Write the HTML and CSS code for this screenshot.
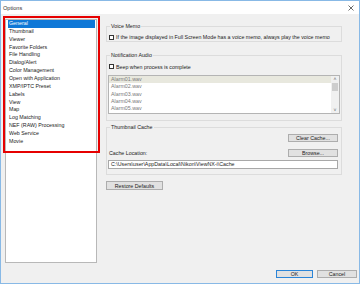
FILE: index.html
```html
<!DOCTYPE html>
<html lang="en">
  <head>
    <meta charset="UTF-8" />
    <meta name="viewport" content="width=device-width, initial-scale=1.0" />
    <title>Options</title>
    <link rel="stylesheet" href="styles.css">
  </head>
  <body>
    <div class="window">
      <div class="titlebar">
        <span class="title">Options</span>
        <svg class="close" width="6" height="6" viewBox="0 0 6 6">
          <path d="M0.5 0.5 L5.5 5.5 M5.5 0.5 L0.5 5.5" stroke="#444" stroke-width="0.8" />
        </svg>
      </div>

      <div class="content">
        <div class="main">
          <ul class="nav">
            <li class="selected">General</li>
            <li>Thumbnail</li>
            <li>Viewer</li>
            <li>Favorite Folders</li>
            <li>File Handling</li>
            <li>Dialog/Alert</li>
            <li>Color Management</li>
            <li>Open with Application</li>
            <li>XMP/IPTC Preset</li>
            <li>Labels</li>
            <li>View</li>
            <li>Map</li>
            <li>Log Matching</li>
            <li>NEF (RAW) Processing</li>
            <li>Web Service</li>
            <li>Movie</li>
          </ul>

          <div class="settings">
            <fieldset class="group group-voice">
              <legend>Voice Memo</legend>
              <label class="check"><span class="box"></span>If the image displayed in Full Screen Mode has a voice memo, always play the voice memo</label>
            </fieldset>

            <fieldset class="group group-audio">
              <legend>Notification Audio</legend>
              <label class="check"><span class="box"></span>Beep when process is complete</label>
              <div class="sound-list">
                <ul class="sounds">
                  <li class="current">Alarm01.wav</li>
                  <li>Alarm02.wav</li>
                  <li>Alarm03.wav</li>
                  <li>Alarm04.wav</li>
                  <li>Alarm05.wav</li>
                </ul>
                <div class="scrollbar">
                  <span class="arrow">&#708;</span>
                  <span class="thumb"></span>
                  <span class="arrow arrow-down">&#709;</span>
                </div>
              </div>
            </fieldset>

            <fieldset class="group group-cache">
              <legend>Thumbnail Cache</legend>
              <div class="row row-end">
                <button class="btn btn-wide">Clear Cache...</button>
              </div>
              <div class="row row-split">
                <span>Cache Location:</span>
                <button class="btn btn-wide">Browse...</button>
              </div>
              <div class="path">C:\Users\user\AppData\Local\Nikon\ViewNX-i\Cache</div>
            </fieldset>

            <button class="btn btn-restore">Restore Defaults</button>
          </div>
        </div>

        <div class="footer">
          <button class="btn btn-default">OK</button>
          <button class="btn btn-cancel">Cancel</button>
        </div>
      </div>

      <!-- annotation over the category list -->
      <div class="marker"></div>
    </div>
  </body>
</html>
```

FILE: styles.css
```css
/* Basic Reset */
* {
  margin: 0;
  padding: 0;
  box-sizing: border-box;
}

body {
  font-family: "Liberation Sans", Arial, sans-serif;
  font-size: 5.3px;
  color: #222;
  background: #fff;
}

/* Window frame */
.window {
  position: relative;
  width: 360px;
  height: 284px;
  border: 1px solid #88b9e6;
  display: flex;
  flex-direction: column;
}

.titlebar {
  height: 13px;
  background: #fff;
  display: flex;
  align-items: center;
  justify-content: space-between;
  padding: 0 5px 0 2px;
}

.title {
  font-size: 5.6px;
  color: #333;
}

.close {
  display: block;
}

.content {
  flex: 1;
  background: #f0f0f0;
  display: flex;
  flex-direction: column;
}

.main {
  flex: 1;
  display: flex;
  padding: 5px 0 0 4px;
}

/* Category list */
.nav {
  list-style: none;
  width: 92px;
  background: #fff;
  border: 1px solid #b8b8b8;
  border-bottom-width: 1.5px;
  padding: 0 1px 0 2px;
}

.nav li {
  height: 7.87px;
  line-height: 7.87px;
  padding-left: 1px;
  white-space: nowrap;
}

.nav li.selected {
  background: #0f78d7;
  color: #fff;
}

/* Settings column */
.settings {
  width: 236px;
  margin-left: 9px;
  padding-top: 4px;
}

.group {
  border: 1px solid #dcdcdc;
  padding: 0 1px;
}

.group legend {
  margin-left: 2px;
  padding: 0 1px;
  line-height: 7px;
}

.check {
  display: flex;
  align-items: center;
  line-height: 6px;
  padding-left: 1px;
  white-space: nowrap;
}

.box {
  width: 5px;
  height: 5px;
  border: 0.8px solid #333;
  background: #fff;
  margin-right: 2px;
}

.group-voice {
  padding-top: 4px;
  padding-bottom: 1px;
}

.group-audio {
  margin-top: 9.5px;
  padding-top: 5px;
  padding-bottom: 6px;
}

.sound-list {
  margin-top: 5.3px;
  height: 39px;
  background: #fff;
  border: 1px solid #b4b4b4;
  display: flex;
}

.sounds {
  flex: 1;
  list-style: none;
  padding-top: 0.3px;
  color: #7a7a7a;
}

.sounds li {
  height: 7.3px;
  line-height: 7.3px;
  padding-left: 2px;
}

.sounds li.current {
  background: #e8e8de;
}

.scrollbar {
  width: 8px;
  background: #f0f0f0;
  display: flex;
  flex-direction: column;
  align-items: center;
}

.arrow {
  height: 6px;
  line-height: 6px;
  font-size: 5px;
  color: #606060;
}

.arrow-down {
  margin-top: auto;
}

.thumb {
  width: 6px;
  height: 8px;
  margin-top: 1px;
  background: #cdcdcd;
}

.group-cache {
  margin-top: 3.3px;
  padding: 3px 3px 5px 1px;
}

.row {
  display: flex;
  align-items: center;
}

.row-end {
  justify-content: flex-end;
}

.row-split {
  justify-content: space-between;
  margin-top: 7px;
  padding-left: 1px;
}

.path {
  margin-top: 2.6px;
  height: 9.4px;
  line-height: 7.4px;
  background: #fff;
  border: 1px solid #a8a8a8;
  padding-left: 2px;
}

/* Buttons */
.btn {
  font-family: inherit;
  font-size: 5.3px;
  color: #222;
  background: #e1e1e1;
  border: 1px solid #adadad;
  height: 8px;
  line-height: 6px;
}

.btn-wide {
  width: 50px;
}

.btn-restore {
  margin-top: 6px;
  width: 57px;
  height: 9px;
}

.footer {
  display: flex;
  justify-content: flex-end;
  gap: 4px;
  padding: 7px 2px 5px 0;
}

.btn-default {
  width: 37px;
  border-color: #2b85d8;
}

.btn-cancel {
  width: 40px;
}

/* Red annotation frame */
.marker {
  position: absolute;
  left: 2px;
  top: 15px;
  width: 97px;
  height: 137px;
  border: 2.5px solid #e60000;
}
```
